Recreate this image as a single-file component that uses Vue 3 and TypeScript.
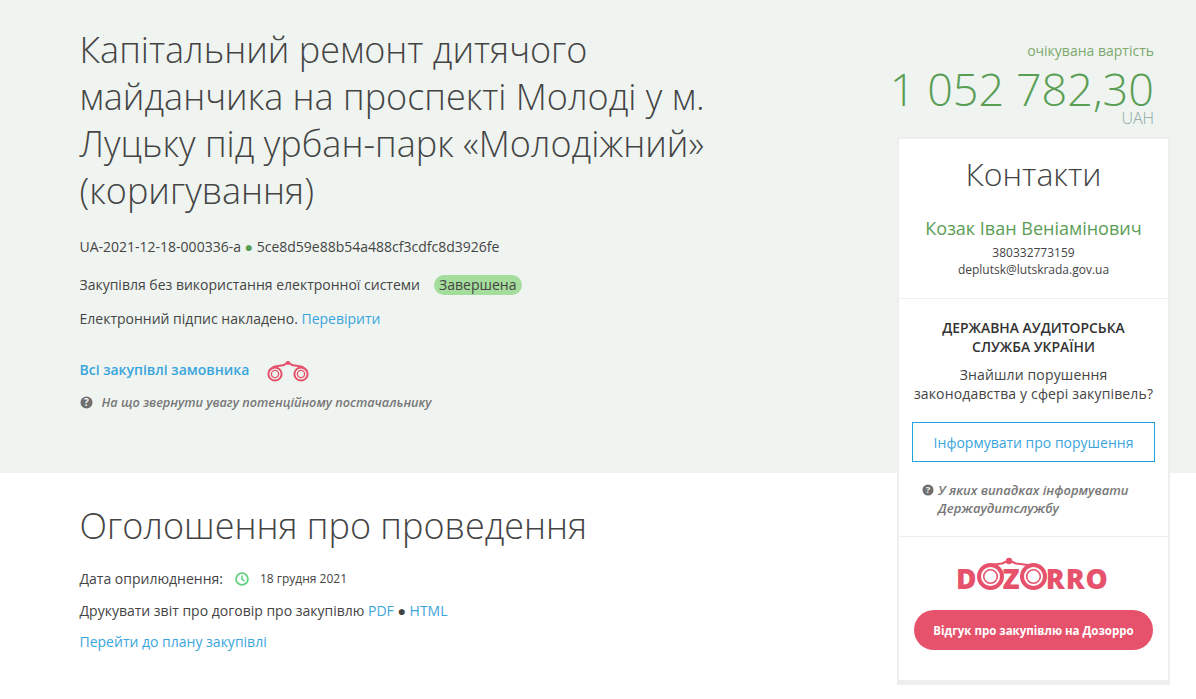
<script setup lang="ts">
const title = 'Капітальний ремонт дитячого майданчика на проспекті Молоді у м. Луцьку під урбан-парк «Молодіжний» (коригування)'
</script>

<template>
  <div class="page">
    <section class="hero">
      <div class="main">
        <h1>{{ title }}</h1>
        <p class="id">UA-2021-12-18-000336-a <span class="dot">●</span> 5ce8d59e88b54a488cf3cdfc8d3926fe</p>
        <p class="kind">Закупівля без використання електронної системи <span class="badge">Завершена</span></p>
        <p class="sign">Електронний підпис накладено. <a>Перевірити</a></p>
        <div class="all">
          <a>Всі закупівлі замовника</a>
          <svg class="bino" viewBox="0 0 42 24" width="42" height="24">
            <path d="M2 12 Q6 7 11 7 L17 6 L21 3 L25 6 L31 7 Q36 7 40 12" fill="none" stroke="#e6526b" stroke-width="2" />
            <circle cx="21" cy="4" r="2" fill="#e6526b" />
            <g fill="none" stroke="#e6526b">
              <circle cx="8" cy="15" r="6.6" stroke-width="2" />
              <circle cx="8" cy="15" r="3.6" stroke-width="1.4" />
              <circle cx="34" cy="15" r="6.6" stroke-width="2" />
              <circle cx="34" cy="15" r="3.6" stroke-width="1.4" />
            </g>
          </svg>
        </div>
        <p class="hint">
          <svg class="q" viewBox="0 0 14 14" width="13" height="13">
            <circle cx="7" cy="7" r="6.5" fill="#6f6f6f" />
            <text x="7" y="10.6" text-anchor="middle" class="qt">?</text>
          </svg>
          <em>На що звернути увагу потенційному постачальнику</em>
        </p>
      </div>

      <aside class="side">
        <div class="price">
          <div class="exp">очікувана вартість</div>
          <div class="sum">1 052 782,30</div>
          <div class="cur">UAH</div>
        </div>
        <div class="card">
          <div class="block contacts">
            <h2>Контакти</h2>
            <div class="person">Козак Іван Веніамінович</div>
            <div class="small">380332773159</div>
            <div class="small">deplutsk@lutskrada.gov.ua</div>
          </div>
          <div class="block audit">
            <h3>ДЕРЖАВНА АУДИТОРСЬКА<br />СЛУЖБА УКРАЇНИ</h3>
            <p class="found">Знайшли порушення<br />законодавства у сфері закупівель?</p>
            <button class="report">Інформувати про порушення</button>
            <div class="cases">
              <svg class="q" viewBox="0 0 14 14" width="12" height="12">
                <circle cx="7" cy="7" r="6.5" fill="#6f6f6f" />
                <text x="7" y="10.6" text-anchor="middle" class="qt">?</text>
              </svg>
              <em>У яких випадках інформувати Держаудитслужбу</em>
            </div>
          </div>
          <div class="block dz">
            <div class="logo">
              <span class="l">D</span>
              <svg class="ring" viewBox="0 0 27 27" width="27" height="27">
                <circle cx="13.5" cy="13.5" r="11.5" fill="none" stroke="#e6526b" stroke-width="4" />
                <circle cx="13.5" cy="13.5" r="6.8" fill="none" stroke="#e6526b" stroke-width="1.6" />
              </svg>
              <span class="l">Z</span>
              <svg class="ring" viewBox="0 0 27 27" width="27" height="27">
                <circle cx="13.5" cy="13.5" r="11.5" fill="none" stroke="#e6526b" stroke-width="4" />
                <circle cx="13.5" cy="13.5" r="6.8" fill="none" stroke="#e6526b" stroke-width="1.6" />
              </svg>
              <span class="l">RRO</span>
              <svg class="bridge" viewBox="0 0 50 12" width="50" height="12">
                <path d="M6 8 L18 6.5 L25 3.5 L32 6.5 L44 8" fill="none" stroke="#e6526b" stroke-width="2.2" />
                <circle cx="25" cy="4" r="3.2" fill="#e6526b" />
              </svg>
            </div>
            <button class="review">Відгук про закупівлю на Дозорро</button>
          </div>
        </div>
      </aside>
    </section>

    <section class="notice">
      <h2>Оголошення про проведення</h2>
      <div class="date">
        <span>Дата оприлюднення:</span>
        <svg viewBox="0 0 16 16" width="14" height="14">
          <circle cx="8" cy="8" r="6.8" fill="none" stroke="#5fd17f" stroke-width="2" />
          <path d="M8 4v4.4l3 1.8" fill="none" stroke="#5fd17f" stroke-width="1.8" />
        </svg>
        <small>18 грудня 2021</small>
      </div>
      <p>Друкувати звіт про договір про закупівлю <a>PDF</a> ● <a>HTML</a></p>
      <p><a>Перейти до плану закупівлі</a></p>
    </section>
  </div>
</template>

<style>
html, body { margin: 0; background: #fff; overflow: hidden; }
</style>

<style scoped>
.page {
  font-family: "Open Sans", "Noto Sans", sans-serif;
  font-size: 14px;
  color: #444;
  height: 699px;
  overflow: hidden;
}
a { color: #3aa5dc; text-decoration: none; }
p { margin: 0; }
.hero {
  height: 473px;
  background: #f0f4f1;
  display: flex;
  justify-content: space-between;
  padding: 0 26px 0 79.5px;
  box-sizing: border-box;
}
.main { width: 660px; padding-top: 26px; }
h1 {
  margin: 0 0 23px;
  font-weight: 300;
  font-size: 36px;
  line-height: 47px;
  color: #444;
}
.id { font-size: 14px; line-height: 20px; margin-bottom: 18px; }
.dot { color: #5a9e55; font-size: 14px; line-height: 14px; }
.kind { line-height: 20px; margin-bottom: 14px; }
.badge {
  display: inline-block;
  margin-left: 10px;
  padding: 0 5.5px;
  background: #a4dd9c;
  border-radius: 10px;
  line-height: 20px;
}
.sign { line-height: 20px; margin-bottom: 28px; }
.all { display: flex; align-items: center; font-weight: 600; height: 24px; margin-bottom: 12px; }
.bino { margin-left: 18px; margin-top: 4px; }
.hint { display: flex; align-items: center; font-size: 12.7px; font-weight: 600; color: #777; line-height: 18px; }
.hint .q { margin-right: 9px; }
.qt { font: 700 11px "Open Sans", sans-serif; fill: #f0f4f1; }
.side { width: 273px; flex: none; display: flex; flex-direction: column; align-items: stretch; height: 0; position: relative; z-index: 1; }
.price { flex: none; text-align: right; padding: 41px 16px 0 0; box-sizing: border-box; height: 137px; margin-left: -40px; }
.exp { color: #7da86b; font-size: 14px; line-height: 20px; }
.sum { color: #5a9e55; font-weight: 300; font-size: 45px; line-height: 42px; white-space: nowrap; margin-top: 7px; }
.cur { color: #8aa8a0; font-weight: 300; font-size: 16px; line-height: 16px; }
.card {
  background: #fff;
  border: 2px solid #eee;
  border-bottom-width: 5px;
  height: 548px;
  box-sizing: border-box;
  flex: none;
}
.block { border-bottom: 1px solid #eee; text-align: center; }
.contacts { height: 160px; box-sizing: border-box; padding-top: 13px; }
.contacts h2 { margin: 0 0 19px; font-weight: 300; font-size: 32px; line-height: 44px; color: #444; }
.person { color: #5a9e55; font-size: 18px; line-height: 26px; margin-bottom: 3px; }
.small { font-size: 12px; line-height: 17px; color: #444; }
.audit { height: 238px; box-sizing: border-box; padding: 19px 13px 0; }
.audit h3 { margin: 0 0 9px; font-size: 13.9px; font-weight: 600; line-height: 19px; color: #333; }
.found { line-height: 19px; margin-bottom: 19px; letter-spacing: 0.15px; }
.report {
  display: block;
  width: 100%;
  height: 40px;
  border: 1px solid #1fa3dc;
  background: #fff;
  color: #3aa5dc;
  font: 400 14px "Open Sans", sans-serif;
}
.cases {
  display: flex;
  align-items: flex-start;
  text-align: left;
  margin: 20px 0 0 10px;
  font-size: 13px;
  font-weight: 600;
  color: #777;
  line-height: 17.5px;
}
.cases .q { margin: 2px 4px 0 0; flex: none; }
.dz { border: 0; padding-top: 24px; }
.logo {
  position: relative;
  display: flex;
  justify-content: center;
  align-items: flex-end;
  height: 32px;
  padding-right: 2px;
  font: 800 28px/27px "Open Sans", sans-serif;
  color: #e6526b;
  letter-spacing: 1px;
}
.l { margin-bottom: 1px; }
.ring { margin: 0 -1px 3px; }
.bridge { position: absolute; left: 85px; top: -4px; }
.review {
  display: block;
  width: 239px;
  height: 40px;
  margin: 17px auto 0;
  border: 0;
  border-radius: 20px;
  background: #e6526b;
  color: #fff;
  font: 700 11.5px "Open Sans", sans-serif;
}
.notice { padding: 28px 0 0 79.5px; }
.notice h2 { margin: 0 0 18px; font-weight: 300; font-size: 36px; line-height: 50px; color: #444; }
.date { display: flex; align-items: center; gap: 12px; line-height: 20px; margin-bottom: 12px; }
.date small { font-size: 12px; margin-left: -1px; }
.notice p { line-height: 20px; margin-bottom: 11px; }
</style>
